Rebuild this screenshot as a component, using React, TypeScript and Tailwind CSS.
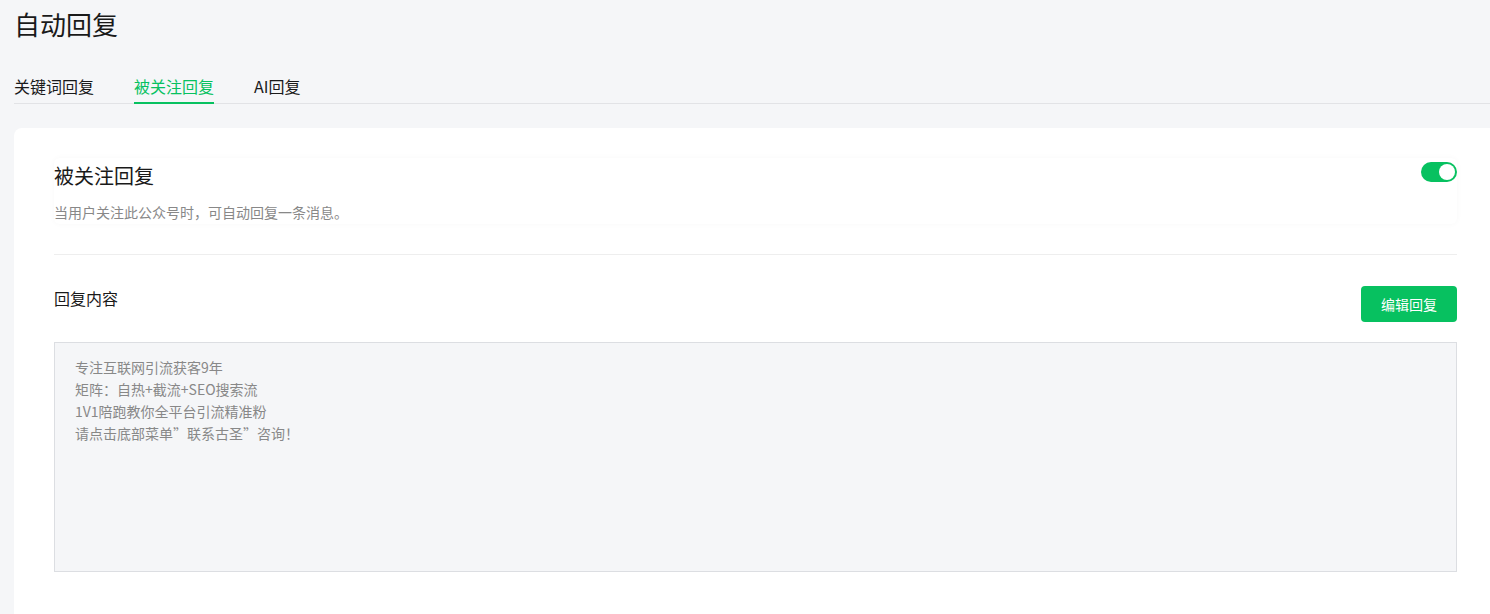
export default function App() {
  const lines = [
    "专注互联网引流获客9年",
    "矩阵：自热+截流+SEO搜索流",
    "1V1陪跑教你全平台引流精准粉",
    "请点击底部菜单”联系古圣”咨询！",
  ];

  return (
    <div
      className="flex h-screen w-[1490px] flex-col overflow-hidden bg-[#f5f6f8] pl-[14px] text-[#1a1a1a]"
      style={{ fontFamily: '"Noto Sans CJK SC", "Noto Sans", sans-serif' }}
    >
      {/* Title */}
      <h1 className="pt-[4px] text-[26px] leading-[40px] font-normal">自动回复</h1>

      {/* Tabs */}
      <div className="mt-[30px] flex gap-10 border-b border-[#e2e3e6]">
        <div className="-mb-px border-b-2 border-transparent pb-[4px] text-base leading-6">关键词回复</div>
        <div className="-mb-px border-b-2 border-[#07c160] pb-[4px] text-base leading-6 text-[#07c160]">被关注回复</div>
        <div className="-mb-px border-b-2 border-transparent pb-[4px] text-base leading-6">AI回复</div>
      </div>

      {/* Card */}
      <div className="mt-[24px] w-[1483px] flex-1 rounded-tl-lg bg-white px-10 pt-[30px]">
        <div className="flex items-start justify-between rounded-md pt-[4px] pb-[2px] shadow-[0_0_6px_rgba(0,0,0,0.03)]">
          <div>
            <div className="text-xl leading-7">被关注回复</div>
            <div className="mt-3 text-sm leading-5 text-[#888]">当用户关注此公众号时，可自动回复一条消息。</div>
          </div>
          <div className="flex h-5 w-9 items-center justify-end rounded-full bg-[#07c160] px-[2px]">
            <div className="h-4 w-4 rounded-full bg-white" />
          </div>
        </div>

        <div className="mt-[30px] h-px bg-[#eeeeee]" />

        <div className="mt-[31px] flex items-start justify-between">
          <div className="text-base leading-6">回复内容</div>
          <button className="h-9 w-24 rounded bg-[#07c160] text-sm font-normal text-white">编辑回复</button>
        </div>

        <div className="mt-5 h-[230px] border border-[#dcdee2] bg-[#f5f6f8] pt-[13px] pl-5 text-sm leading-[22px] text-[#888]">
          {lines.map((l) => (
            <div key={l}>{l}</div>
          ))}
        </div>
      </div>
    </div>
  );
}
